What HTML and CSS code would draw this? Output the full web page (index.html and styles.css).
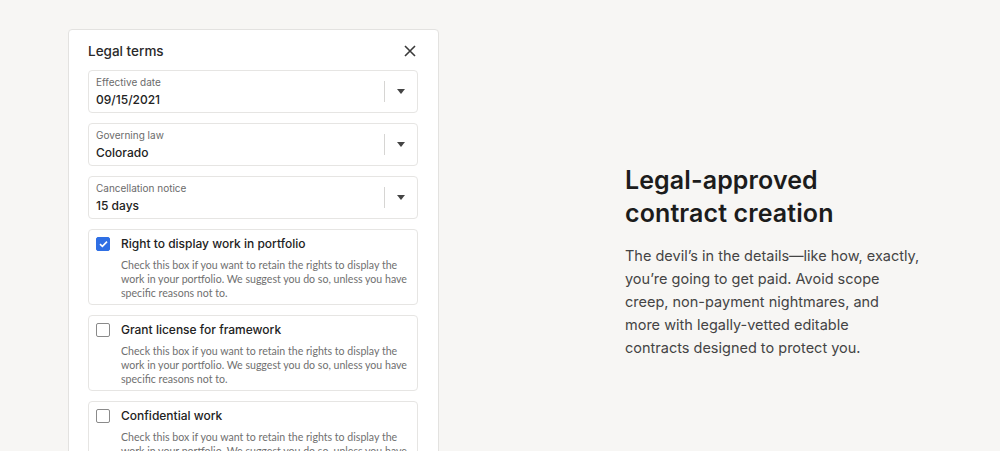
FILE: index.html
```html
<!DOCTYPE html>
<html lang="en">

<head>
   <meta charset="UTF-8">
   <meta name="viewport" content="width=device-width, initial-scale=1.0">
   <title>Legal terms</title>
   <link rel="stylesheet" href="styles.css">
</head>

<body>
   <div class="page">
      <div class="left">
         <div class="panel">
            <div class="panel-head">
               <span class="panel-title">Legal terms</span>
               <svg class="close" width="12" height="12" viewBox="0 0 12 12">
                  <path d="M1 1 L11 11 M11 1 L1 11" stroke="#3a3a3a" stroke-width="1.6" fill="none" />
               </svg>
            </div>

            <div class="field">
               <div class="field-text">
                  <span class="field-label">Effective date</span>
                  <span class="field-value">09/15/2021</span>
               </div>
               <span class="divider"></span>
               <span class="caret"></span>
            </div>

            <div class="field">
               <div class="field-text">
                  <span class="field-label">Governing law</span>
                  <span class="field-value">Colorado</span>
               </div>
               <span class="divider"></span>
               <span class="caret"></span>
            </div>

            <div class="field">
               <div class="field-text">
                  <span class="field-label">Cancellation notice</span>
                  <span class="field-value">15 days</span>
               </div>
               <span class="divider"></span>
               <span class="caret"></span>
            </div>

            <div class="option">
               <span class="box checked">
                  <svg width="9" height="8" viewBox="0 0 9 8">
                     <path d="M1 4.2 L3.4 6.4 L8 1.6" stroke="#fff" stroke-width="1.6" fill="none" />
                  </svg>
               </span>
               <div class="option-text">
                  <div class="option-title">Right to display work in portfolio</div>
                  <p class="option-desc">Check this box if you want to retain the rights to display the work in your portfolio. We suggest you do so, unless you have specific reasons not to.</p>
               </div>
            </div>

            <div class="option">
               <span class="box"></span>
               <div class="option-text">
                  <div class="option-title">Grant license for framework</div>
                  <p class="option-desc">Check this box if you want to retain the rights to display the work in your portfolio. We suggest you do so, unless you have specific reasons not to.</p>
               </div>
            </div>

            <div class="option">
               <span class="box"></span>
               <div class="option-text">
                  <div class="option-title">Confidential work</div>
                  <p class="option-desc">Check this box if you want to retain the rights to display the work in your portfolio. We suggest you do so, unless you have specific reasons not to.</p>
               </div>
            </div>
         </div>
      </div>

      <div class="right">
         <h1>Legal-approved<br>contract creation</h1>
         <p>The devil’s in the details—like how, exactly,<br>
            you’re going to get paid. Avoid scope<br>
            creep, non-payment nightmares, and<br>
            more with legally-vetted editable<br>
            contracts designed to protect you.</p>
      </div>
   </div>
</body>
</html>
```

FILE: styles.css
```css
* {
   box-sizing: border-box;
}

html,
body {
   margin: 0;
   height: 100%;
   overflow: hidden;
}

body {
   background-color: #f7f6f4;
   font-family: Inter, "Noto Sans", sans-serif;
   color: #222;
}

.page {
   display: flex;
   align-items: flex-start;
}

.left {
   width: 625px;
   padding: 29px 0 0 68px;
}

/* the modal panel */
.panel {
   width: 371px;
   background-color: #fff;
   border: 1px solid #e3e2e0;
   border-radius: 4px;
   padding: 0 20px 20px 19px;
}

.panel-head {
   display: flex;
   justify-content: space-between;
   align-items: center;
   height: 40px;
   padding-top: 2px;
}

.panel-title {
   font-size: 13.5px;
   font-weight: 500;
   color: #2a2a2a;
}

.close {
   margin-right: 2px;
}

.field {
   display: flex;
   align-items: center;
   height: 43px;
   border: 1px solid #e6e5e3;
   border-radius: 4px;
   padding: 0 12px 0 7px;
   margin-bottom: 10px;
}

.field-text {
   flex: 1;
   display: flex;
   flex-direction: column;
}

.field-label {
   font-size: 10px;
   color: #6b6b6b;
   line-height: 14px;
}

.field-value {
   font-size: 12px;
   font-weight: 500;
   color: #222;
   line-height: 18px;
   margin-top: 2px;
}

.divider {
   width: 1px;
   height: 21px;
   background-color: #d6d5d3;
   margin-right: 12px;
}

.caret {
   width: 0;
   height: 0;
   border-left: 4px solid transparent;
   border-right: 4px solid transparent;
   border-top: 5px solid #444;
}

.option {
   display: flex;
   align-items: flex-start;
   border: 1px solid #e6e5e3;
   border-radius: 4px;
   padding: 6px 6px 4px 7px;
   margin-bottom: 10px;
}

.box {
   flex: none;
   display: flex;
   align-items: center;
   justify-content: center;
   width: 14px;
   height: 14px;
   border: 1px solid #8a8a8a;
   border-radius: 2px;
   margin-top: 1px;
   margin-right: 11px;
   background-color: #fff;
}

.box.checked {
   background-color: #2f6fe4;
   border-color: #2f6fe4;
}

.option-title {
   font-size: 12px;
   font-weight: 500;
   color: #222;
   line-height: 16px;
}

.option-desc {
   margin: 6px 0 0 0;
   font-family: Lato, Inter, sans-serif;
   font-size: 10.6px;
   line-height: 14px;
   color: #707070;
}

/* marketing copy */
.right {
   padding-top: 164px;
   width: 330px;
}

.right h1 {
   margin: 0 0 14px 0;
   font-size: 25px;
   font-weight: 600;
   line-height: 33px;
   color: #1c1c1c;
   letter-spacing: 0.1px;
}

.right p {
   margin: 0;
   font-size: 14.5px;
   line-height: 23px;
   color: #444;
}
```
